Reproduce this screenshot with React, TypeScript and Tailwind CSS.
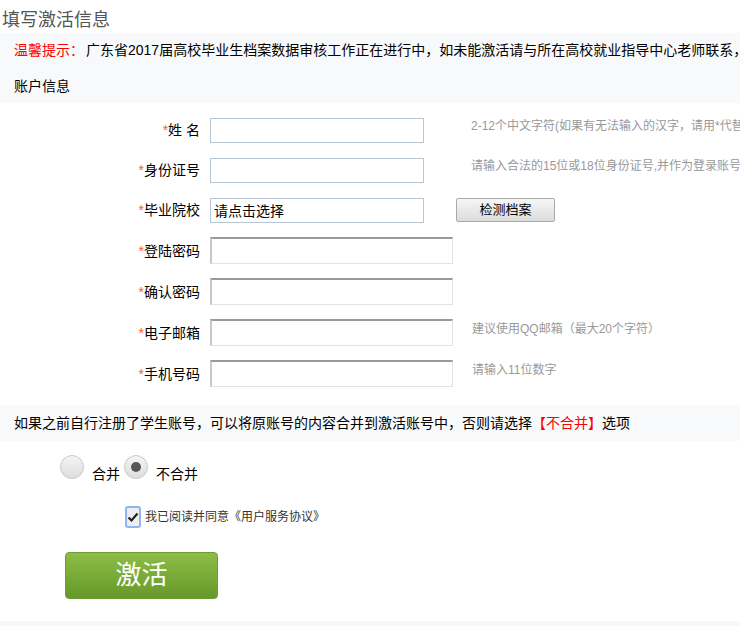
import React from "react";

const font = { fontFamily: '"Liberation Sans", "Noto Sans CJK SC", sans-serif' };

const rows = [
  { label: "姓 名", wide: false, hint: "2-12个中文字符(如果有无法输入的汉字，请用*代替)" },
  { label: "身份证号", wide: false, hint: "请输入合法的15位或18位身份证号,并作为登录账号" },
  { label: "毕业院校", wide: false, value: "请点击选择", button: true },
  { label: "登陆密码", wide: true },
  { label: "确认密码", wide: true },
  { label: "电子邮箱", wide: true, hint: "建议使用QQ邮箱（最大20个字符）" },
  { label: "手机号码", wide: true, hint: "请输入11位数字" },
];

export default function App() {
  return (
    <div className="h-[626px] w-[740px] overflow-hidden bg-white text-black" style={font}>
      <h1 className="pl-[2px] pt-[8px] text-[18px] leading-[24px] text-[#555]">填写激活信息</h1>

      <section className="mt-[1px] h-[70px] overflow-hidden bg-[#f8f9fa] pl-[14px] pt-[6px] text-[14px]">
        <p className="whitespace-nowrap leading-[22px]">
          <span className="text-[#f00]">温馨提示：</span>
          <span className="ml-[2px]">广东省2017届高校毕业生档案数据审核工作正在进行中，如未能激活请与所在高校就业指导中心老师联系，</span>
        </p>
        <p className="mt-[14px] leading-[22px]">账户信息</p>
      </section>

      <div className="mt-[14px] flex flex-col gap-[14px]">
        {rows.map((r) => (
          <div className={`flex items-center ${r.wide ? "h-[27px]" : "h-[26px]"}`} key={r.label}>
            <label className="w-[200px] shrink-0 text-right text-[14px] leading-[20px]">
              <span className="text-[#ff5a28]">*</span>
              {r.label}
            </label>
            <input
              className={
                r.wide
                  ? "ml-[10px] h-[27px] w-[243px] shrink-0 border border-[#e2e2e2] border-t-2 border-l-2 border-t-[#9a9a9a] border-l-[#c8c8c8] bg-white px-1 text-[14px] outline-none"
                  : "ml-[10px] h-[25px] w-[214px] shrink-0 border border-[#b8c6d3] bg-white px-[3px] text-[14px] text-black outline-none"
              }
              defaultValue={r.value}
              readOnly={!!r.value}
            />
            {r.button && (
              <button className="ml-[32px] h-[24px] w-[99px] shrink-0 rounded-[2px] border border-[#a9a9a9] bg-gradient-to-b from-[#f6f6f6] to-[#dcdcdc] text-[13px]">
                检测档案
              </button>
            )}
            {r.hint && (
              <span className={`${r.wide ? "ml-[19px]" : "ml-[47px]"} -mt-[8px] whitespace-nowrap text-[12px] text-[#999]`}>
                {r.hint}
              </span>
            )}
          </div>
        ))}
      </div>

      <section className="mt-[18px] flex h-[36px] items-center bg-[#f8f9fa] pl-[14px] text-[14px]">
        如果之前自行注册了学生账号，可以将原账号的内容合并到激活账号中，否则请选择
        <span className="text-[#f00]">【不合并】</span>选项
      </section>

      <div className="ml-[60px] mt-[14px] flex items-end text-[14px]">
        <span className="flex h-[24px] w-[24px] items-center justify-center rounded-full border border-[#c8c8c8] bg-gradient-to-b from-[#f4f4f4] to-[#dedede]" />
        <span className="mb-[-6px] ml-[8px]">合并</span>
        <span className="ml-[4px] flex h-[24px] w-[24px] items-center justify-center rounded-full border border-[#c8c8c8] bg-gradient-to-b from-[#f4f4f4] to-[#dedede]">
          <span className="h-[10px] w-[10px] rounded-full bg-[#555]" />
        </span>
        <span className="mb-[-6px] ml-[8px]">不合并</span>
      </div>

      <div className="ml-[125px] mt-[27px] flex items-center text-[12px] text-[#333]">
        <span className="flex h-[22px] w-[16px] items-center justify-center rounded-[3px] border-2 border-[#8fb3f5] bg-[#eee]">
          <svg width="12" height="12" viewBox="0 0 12 12">
            <path d="M1.5 6.5 L4.5 9.5 L10.5 2.5" stroke="#222" strokeWidth="2.2" fill="none" />
          </svg>
        </span>
        <span className="ml-[4px]">我已阅读并同意《用户服务协议》</span>
      </div>

      <button className="ml-[65px] mt-[24px] h-[47px] w-[153px] rounded-[4px] border border-[#6e9c33] bg-gradient-to-b from-[#8dbd45] to-[#66992a] text-[26px] text-white">
        激活
      </button>

      <div className="mt-[22px] h-[8px] bg-[#f6f7f8]" />
    </div>
  );
}
